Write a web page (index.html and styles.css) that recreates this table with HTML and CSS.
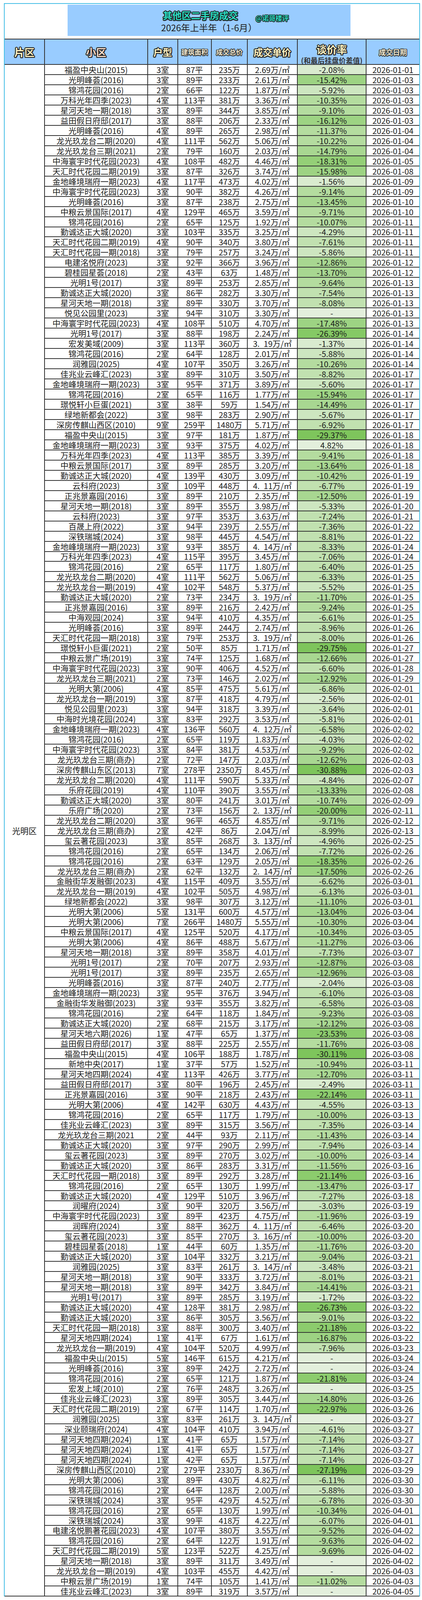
FILE: index.html
```html
<!DOCTYPE html>
<html lang="zh-CN">
<head>
<meta charset="utf-8">
<title>其他区二手房成交</title>
<link rel="stylesheet" href="styles.css">
</head>
<body>
<div class="sheet">
  <div class="title-area">
    <div class="title-box">
      <div class="title-line">
        <span class="title">其他区二手房成交</span>
        <span class="tag">@诺哥楼评</span>
      </div>
      <div class="subtitle">2026年上半年（1-6月）</div>
    </div>
  </div>

  <div class="grid head">
    <div class="area"><span class="lbl f-a">片区</span></div>
    <div><span class="lbl f-b">小区</span></div>
    <div><span class="lbl f-a sm">户型</span></div>
    <div><span class="lbl f-c xs">建筑面积</span></div>
    <div><span class="lbl f-c xs">成交总价</span></div>
    <div><span class="lbl f-a sm">成交单价</span></div>
    <div class="rate-h"><span class="lbl f-a t1">谈价率</span><span class="t2">(和最后挂盘价差值)</span></div>
    <div><span class="lbl f-c xs2">成交日期</span></div>
  </div>

  <div class="grid body">
    <div class="area">光明区</div>
<div class="row"><div>福盈中央山(2015)</div><div>3室</div><div>87平</div><div>235万</div><div>2.69万/㎡</div><div class="c1">-2.08%</div><div>2026-01-01</div></div>
<div class="row"><div>光明峰荟(2016)</div><div>3室</div><div>89平</div><div>233万</div><div>2.61万/㎡</div><div class="c6">-15.42%</div><div>2026-01-03</div></div>
<div class="row"><div>锦鸿花园(2016)</div><div>2室</div><div>66平</div><div>122万</div><div>1.87万/㎡</div><div class="c2">-5.92%</div><div>2026-01-03</div></div>
<div class="row"><div>万科光年四季(2023)</div><div>4室</div><div>113平</div><div>381万</div><div>3.36万/㎡</div><div class="c4">-10.35%</div><div>2026-01-03</div></div>
<div class="row"><div>星河天地一期(2018)</div><div>3室</div><div>89平</div><div>344万</div><div>3.85万/㎡</div><div class="c4">-9.10%</div><div>2026-01-03</div></div>
<div class="row"><div>益田假日府邸(2017)</div><div>3室</div><div>88平</div><div>206万</div><div>2.33万/㎡</div><div class="c6">-16.12%</div><div>2026-01-03</div></div>
<div class="row"><div>光明峰荟(2016)</div><div>4室</div><div>89平</div><div>265万</div><div>2.98万/㎡</div><div class="c4">-11.37%</div><div>2026-01-04</div></div>
<div class="row"><div>龙光玖龙台二期(2020)</div><div>4室</div><div>111平</div><div>562万</div><div>5.06万/㎡</div><div class="c4">-10.22%</div><div>2026-01-04</div></div>
<div class="row"><div>龙光玖龙台三期(2021)</div><div>2室</div><div>79平</div><div>160万</div><div>2.03万/㎡</div><div class="c5">-14.79%</div><div>2026-01-04</div></div>
<div class="row"><div>中海寰宇时代花园(2023)</div><div>4室</div><div>108平</div><div>482万</div><div>4.46万/㎡</div><div class="c7">-18.31%</div><div>2026-01-05</div></div>
<div class="row"><div>天汇时代花园二期(2019)</div><div>3室</div><div>87平</div><div>326万</div><div>3.74万/㎡</div><div class="c6">-15.98%</div><div>2026-01-08</div></div>
<div class="row"><div>金地峰境瑞府一期(2023)</div><div>4室</div><div>117平</div><div>473万</div><div>4.02万/㎡</div><div class="c1">-1.56%</div><div>2026-01-09</div></div>
<div class="row"><div>中海寰宇时代花园(2023)</div><div>3室</div><div>90平</div><div>382万</div><div>4.26万/㎡</div><div class="c4">-9.14%</div><div>2026-01-09</div></div>
<div class="row"><div>光明峰荟(2016)</div><div>3室</div><div>87平</div><div>238万</div><div>2.75万/㎡</div><div class="c5">-13.45%</div><div>2026-01-10</div></div>
<div class="row"><div>中粮云景国际(2017)</div><div>4室</div><div>129平</div><div>465万</div><div>3.59万/㎡</div><div class="c4">-9.71%</div><div>2026-01-10</div></div>
<div class="row"><div>锦鸿花园(2016)</div><div>2室</div><div>65平</div><div>125万</div><div>1.92万/㎡</div><div class="c4">-10.07%</div><div>2026-01-11</div></div>
<div class="row"><div>勤诚达正大城(2020)</div><div>3室</div><div>103平</div><div>335万</div><div>3.25万/㎡</div><div class="c2">-4.29%</div><div>2026-01-11</div></div>
<div class="row"><div>天汇时代花园二期(2019)</div><div>4室</div><div>90平</div><div>340万</div><div>3.80万/㎡</div><div class="c3">-7.61%</div><div>2026-01-11</div></div>
<div class="row"><div>天汇时代花园一期(2018)</div><div>3室</div><div>79平</div><div>257万</div><div>3.24万/㎡</div><div class="c2">-5.86%</div><div>2026-01-11</div></div>
<div class="row"><div>电建洺悦府(2023)</div><div>3室</div><div>92平</div><div>366万</div><div>3.96万/㎡</div><div class="c5">-12.86%</div><div>2026-01-12</div></div>
<div class="row"><div>碧桂园星荟(2018)</div><div>2室</div><div>43平</div><div>63万</div><div>1.48万/㎡</div><div class="c5">-13.70%</div><div>2026-01-12</div></div>
<div class="row"><div>光明1号(2017)</div><div>3室</div><div>89平</div><div>253万</div><div>2.85万/㎡</div><div class="c4">-9.64%</div><div>2026-01-13</div></div>
<div class="row"><div>勤诚达正大城(2020)</div><div>3室</div><div>86平</div><div>282万</div><div>3.30万/㎡</div><div class="c3">-7.54%</div><div>2026-01-13</div></div>
<div class="row"><div>星河天地一期(2018)</div><div>3室</div><div>89平</div><div>330万</div><div>3.70万/㎡</div><div class="c3">-8.08%</div><div>2026-01-13</div></div>
<div class="row"><div>悦见公园里(2023)</div><div>3室</div><div>94平</div><div>310万</div><div>3.30万/㎡</div><div class="c0">-</div><div>2026-01-13</div></div>
<div class="row"><div>中海寰宇时代花园(2023)</div><div>4室</div><div>108平</div><div>510万</div><div>4.70万/㎡</div><div class="c6">-17.48%</div><div>2026-01-13</div></div>
<div class="row"><div>光明1号(2017)</div><div>3室</div><div>88平</div><div>198万</div><div>2.24万/㎡</div><div class="c9">-26.39%</div><div>2026-01-14</div></div>
<div class="row"><div>宏发美域(2009)</div><div>3室</div><div>113平</div><div>360万</div><div>3.&ensp;19万/㎡</div><div class="c1">-1.37%</div><div>2026-01-14</div></div>
<div class="row"><div>锦鸿花园(2016)</div><div>2室</div><div>64平</div><div>128万</div><div>2.01万/㎡</div><div class="c2">-5.88%</div><div>2026-01-14</div></div>
<div class="row"><div>润雅园(2025)</div><div>4室</div><div>107平</div><div>350万</div><div>3.26万/㎡</div><div class="c4">-10.26%</div><div>2026-01-14</div></div>
<div class="row"><div>佳兆业云峰汇(2023)</div><div>3室</div><div>89平</div><div>310万</div><div>3.50万/㎡</div><div class="c3">-8.82%</div><div>2026-01-17</div></div>
<div class="row"><div>金地峰境瑞府一期(2023)</div><div>3室</div><div>95平</div><div>371万</div><div>3.89万/㎡</div><div class="c2">-5.60%</div><div>2026-01-17</div></div>
<div class="row"><div>锦鸿花园(2016)</div><div>2室</div><div>65平</div><div>116万</div><div>1.77万/㎡</div><div class="c6">-15.94%</div><div>2026-01-17</div></div>
<div class="row"><div>璟悦轩小巨蛋(2021)</div><div>3室</div><div>38平</div><div>59万</div><div>1.54万/㎡</div><div class="c5">-14.49%</div><div>2026-01-17</div></div>
<div class="row"><div>绿地新都会(2022)</div><div>3室</div><div>98平</div><div>283万</div><div>2.90万/㎡</div><div class="c2">-5.67%</div><div>2026-01-17</div></div>
<div class="row"><div>深房传麒山西区(2010)</div><div>9室</div><div>259平</div><div>1480万</div><div>5.71万/㎡</div><div class="c3">-6.92%</div><div>2026-01-17</div></div>
<div class="row"><div>福盈中央山(2015)</div><div>3室</div><div>97平</div><div>181万</div><div>1.87万/㎡</div><div class="c10">-29.37%</div><div>2026-01-18</div></div>
<div class="row"><div>金地峰境瑞府一期(2023)</div><div>3室</div><div>93平</div><div>375万</div><div>4.02万/㎡</div><div class="c0">4.82%</div><div>2026-01-18</div></div>
<div class="row"><div>万科光年四季(2023)</div><div>4室</div><div>113平</div><div>385万</div><div>3.39万/㎡</div><div class="c4">-9.41%</div><div>2026-01-18</div></div>
<div class="row"><div>中粮云景国际(2017)</div><div>3室</div><div>89平</div><div>285万</div><div>3.20万/㎡</div><div class="c5">-13.64%</div><div>2026-01-18</div></div>
<div class="row"><div>勤诚达正大城(2020)</div><div>4室</div><div>139平</div><div>430万</div><div>3.09万/㎡</div><div class="c4">-10.42%</div><div>2026-01-19</div></div>
<div class="row"><div>云科府(2023)</div><div>3室</div><div>109平</div><div>448万</div><div>4.&ensp;11万/㎡</div><div class="c3">-6.77%</div><div>2026-01-19</div></div>
<div class="row"><div>正兆景嘉园(2016)</div><div>3室</div><div>89平</div><div>210万</div><div>2.35万/㎡</div><div class="c5">-12.50%</div><div>2026-01-19</div></div>
<div class="row"><div>星河天地一期(2018)</div><div>3室</div><div>89平</div><div>355万</div><div>3.98万/㎡</div><div class="c2">-5.33%</div><div>2026-01-20</div></div>
<div class="row"><div>云科府(2023)</div><div>3室</div><div>97平</div><div>353万</div><div>3.63万/㎡</div><div class="c3">-7.24%</div><div>2026-01-21</div></div>
<div class="row"><div>百晟上府(2022)</div><div>3室</div><div>94平</div><div>239万</div><div>2.55万/㎡</div><div class="c3">-7.36%</div><div>2026-01-22</div></div>
<div class="row"><div>深铁瑞城(2024)</div><div>3室</div><div>98平</div><div>445万</div><div>4.54万/㎡</div><div class="c3">-8.81%</div><div>2026-01-22</div></div>
<div class="row"><div>金地峰境瑞府一期(2023)</div><div>3室</div><div>93平</div><div>385万</div><div>4.&ensp;14万/㎡</div><div class="c3">-8.33%</div><div>2026-01-24</div></div>
<div class="row"><div>万科光年四季(2023)</div><div>4室</div><div>115平</div><div>395万</div><div>3.45万/㎡</div><div class="c3">-7.06%</div><div>2026-01-24</div></div>
<div class="row"><div>锦鸿花园(2016)</div><div>2室</div><div>65平</div><div>117万</div><div>1.80万/㎡</div><div class="c3">-6.40%</div><div>2026-01-25</div></div>
<div class="row"><div>龙光玖龙台二期(2020)</div><div>4室</div><div>111平</div><div>562万</div><div>5.06万/㎡</div><div class="c3">-6.33%</div><div>2026-01-25</div></div>
<div class="row"><div>龙光玖龙台一期(2019)</div><div>4室</div><div>102平</div><div>548万</div><div>5.37万/㎡</div><div class="c2">-5.52%</div><div>2026-01-25</div></div>
<div class="row"><div>勤诚达正大城(2020)</div><div>2室</div><div>73平</div><div>234万</div><div>3.&ensp;19万/㎡</div><div class="c4">-11.70%</div><div>2026-01-25</div></div>
<div class="row"><div>正兆景嘉园(2016)</div><div>3室</div><div>89平</div><div>216万</div><div>2.42万/㎡</div><div class="c4">-9.24%</div><div>2026-01-25</div></div>
<div class="row"><div>中海观园(2024)</div><div>3室</div><div>94平</div><div>410万</div><div>4.35万/㎡</div><div class="c3">-6.61%</div><div>2026-01-25</div></div>
<div class="row"><div>光明峰荟(2016)</div><div>3室</div><div>89平</div><div>244万</div><div>2.74万/㎡</div><div class="c3">-8.96%</div><div>2026-01-26</div></div>
<div class="row"><div>天汇时代花园一期(2018)</div><div>3室</div><div>79平</div><div>253万</div><div>3.&ensp;19万/㎡</div><div class="c3">-8.00%</div><div>2026-01-26</div></div>
<div class="row"><div>璟悦轩小巨蛋(2021)</div><div>2室</div><div>50平</div><div>85万</div><div>1.71万/㎡</div><div class="c10">-29.75%</div><div>2026-01-27</div></div>
<div class="row"><div>中粮云景广场(2019)</div><div>3室</div><div>74平</div><div>125万</div><div>1.68万/㎡</div><div class="c5">-12.66%</div><div>2026-01-27</div></div>
<div class="row"><div>中海寰宇时代花园(2023)</div><div>3室</div><div>90平</div><div>406万</div><div>4.52万/㎡</div><div class="c3">-6.60%</div><div>2026-01-28</div></div>
<div class="row"><div>龙光玖龙台三期(2021)</div><div>2室</div><div>73平</div><div>146万</div><div>2.02万/㎡</div><div class="c5">-12.92%</div><div>2026-01-29</div></div>
<div class="row"><div>光明大第(2006)</div><div>4室</div><div>85平</div><div>475万</div><div>5.61万/㎡</div><div class="c3">-6.86%</div><div>2026-02-01</div></div>
<div class="row"><div>龙光玖龙台一期(2019)</div><div>3室</div><div>87平</div><div>418万</div><div>4.79万/㎡</div><div class="c1">-2.56%</div><div>2026-02-01</div></div>
<div class="row"><div>悦见公园里(2023)</div><div>3室</div><div>94平</div><div>318万</div><div>3.39万/㎡</div><div class="c2">-3.64%</div><div>2026-02-01</div></div>
<div class="row"><div>中海时光境花园(2024)</div><div>3室</div><div>83平</div><div>292万</div><div>3.53万/㎡</div><div class="c2">-5.81%</div><div>2026-02-01</div></div>
<div class="row"><div>金地峰境瑞府一期(2023)</div><div>4室</div><div>136平</div><div>560万</div><div>4.&ensp;12万/㎡</div><div class="c3">-6.58%</div><div>2026-02-02</div></div>
<div class="row"><div>锦鸿花园(2016)</div><div>2室</div><div>65平</div><div>119万</div><div>1.83万/㎡</div><div class="c2">-4.03%</div><div>2026-02-02</div></div>
<div class="row"><div>中海寰宇时代花园(2023)</div><div>3室</div><div>84平</div><div>381万</div><div>4.53万/㎡</div><div class="c4">-9.29%</div><div>2026-02-02</div></div>
<div class="row"><div>龙光玖龙台三期(商办)</div><div>2室</div><div>72平</div><div>147万</div><div>2.03万/㎡</div><div class="c5">-12.62%</div><div>2026-02-03</div></div>
<div class="row"><div>深房传麒山东区(2013)</div><div>7室</div><div>278平</div><div>2350万</div><div>8.45万/㎡</div><div class="c10">-30.88%</div><div>2026-02-03</div></div>
<div class="row"><div>龙光玖龙台二期(2020)</div><div>4室</div><div>111平</div><div>590万</div><div>5.33万/㎡</div><div class="c2">-4.84%</div><div>2026-02-07</div></div>
<div class="row"><div>乐府花园(2019)</div><div>4室</div><div>110平</div><div>390万</div><div>3.55万/㎡</div><div class="c5">-13.33%</div><div>2026-02-08</div></div>
<div class="row"><div>勤诚达正大城(2020)</div><div>3室</div><div>80平</div><div>241万</div><div>3.01万/㎡</div><div class="c4">-10.74%</div><div>2026-02-09</div></div>
<div class="row"><div>乐府广场(2020)</div><div>2室</div><div>73平</div><div>156万</div><div>2.&ensp;13万/㎡</div><div class="c7">-20.00%</div><div>2026-02-11</div></div>
<div class="row"><div>龙光玖龙台二期(2020)</div><div>3室</div><div>96平</div><div>465万</div><div>4.85万/㎡</div><div class="c4">-9.71%</div><div>2026-02-12</div></div>
<div class="row"><div>龙光玖龙台三期(商办)</div><div>2室</div><div>42平</div><div>86万</div><div>2.04万/㎡</div><div class="c3">-8.99%</div><div>2026-02-13</div></div>
<div class="row"><div>玺云著花园(2023)</div><div>3室</div><div>85平</div><div>268万</div><div>3.&ensp;13万/㎡</div><div class="c2">-4.96%</div><div>2026-02-25</div></div>
<div class="row"><div>锦鸿花园(2016)</div><div>2室</div><div>65平</div><div>134万</div><div>2.06万/㎡</div><div class="c3">-7.72%</div><div>2026-02-26</div></div>
<div class="row"><div>锦鸿花园(2016)</div><div>2室</div><div>63平</div><div>129万</div><div>2.05万/㎡</div><div class="c7">-18.35%</div><div>2026-02-26</div></div>
<div class="row"><div>龙光玖龙台三期(商办)</div><div>2室</div><div>62平</div><div>132万</div><div>2.&ensp;14万/㎡</div><div class="c6">-17.50%</div><div>2026-02-26</div></div>
<div class="row"><div>金融街华发融御(2023)</div><div>4室</div><div>115平</div><div>409万</div><div>3.55万/㎡</div><div class="c3">-6.62%</div><div>2026-03-01</div></div>
<div class="row"><div>龙光玖龙台一期(2019)</div><div>4室</div><div>102平</div><div>505万</div><div>4.98万/㎡</div><div class="c3">-6.13%</div><div>2026-03-01</div></div>
<div class="row"><div>绿地新都会(2022)</div><div>3室</div><div>98平</div><div>307万</div><div>3.12万/㎡</div><div class="c4">-11.10%</div><div>2026-03-01</div></div>
<div class="row"><div>光明大第(2006)</div><div>5室</div><div>131平</div><div>600万</div><div>4.57万/㎡</div><div class="c5">-13.04%</div><div>2026-03-04</div></div>
<div class="row"><div>光明大第(2006)</div><div>7室</div><div>266平</div><div>1480万</div><div>5.55万/㎡</div><div class="c4">-10.30%</div><div>2026-03-04</div></div>
<div class="row"><div>中粮云景国际(2017)</div><div>4室</div><div>125平</div><div>520万</div><div>4.17万/㎡</div><div class="c4">-10.34%</div><div>2026-03-05</div></div>
<div class="row"><div>光明大第(2006)</div><div>4室</div><div>86平</div><div>488万</div><div>5.67万/㎡</div><div class="c4">-11.27%</div><div>2026-03-06</div></div>
<div class="row"><div>星河天地一期(2018)</div><div>3室</div><div>89平</div><div>358万</div><div>4.01万/㎡</div><div class="c3">-7.73%</div><div>2026-03-07</div></div>
<div class="row"><div>光明1号(2017)</div><div>2室</div><div>70平</div><div>207万</div><div>2.93万/㎡</div><div class="c5">-12.87%</div><div>2026-03-08</div></div>
<div class="row"><div>光明1号(2017)</div><div>3室</div><div>89平</div><div>235万</div><div>2.65万/㎡</div><div class="c5">-12.96%</div><div>2026-03-08</div></div>
<div class="row"><div>光明峰荟(2016)</div><div>3室</div><div>87平</div><div>240万</div><div>2.77万/㎡</div><div class="c1">-2.04%</div><div>2026-03-08</div></div>
<div class="row"><div>金地峰境瑞府一期(2023)</div><div>3室</div><div>95平</div><div>376万</div><div>3.94万/㎡</div><div class="c3">-6.10%</div><div>2026-03-08</div></div>
<div class="row"><div>金融街华发融御(2023)</div><div>3室</div><div>93平</div><div>355万</div><div>3.82万/㎡</div><div class="c3">-6.58%</div><div>2026-03-08</div></div>
<div class="row"><div>锦鸿花园(2016)</div><div>2室</div><div>64平</div><div>118万</div><div>1.84万/㎡</div><div class="c4">-9.23%</div><div>2026-03-08</div></div>
<div class="row"><div>勤诚达正大城(2020)</div><div>2室</div><div>68平</div><div>215万</div><div>3.17万/㎡</div><div class="c5">-12.12%</div><div>2026-03-08</div></div>
<div class="row"><div>星河天地六期(2026)</div><div>1室</div><div>47平</div><div>65万</div><div>1.37万/㎡</div><div class="c8">-23.53%</div><div>2026-03-08</div></div>
<div class="row"><div>益田假日府邸(2017)</div><div>3室</div><div>88平</div><div>225万</div><div>2.55万/㎡</div><div class="c4">-11.76%</div><div>2026-03-08</div></div>
<div class="row"><div>福盈中央山(2015)</div><div>4室</div><div>106平</div><div>188万</div><div>1.78万/㎡</div><div class="c10">-30.11%</div><div>2026-03-08</div></div>
<div class="row"><div>新地中央(2017)</div><div>1室</div><div>37平</div><div>57万</div><div>1.52万/㎡</div><div class="c4">-10.94%</div><div>2026-03-11</div></div>
<div class="row"><div>星河天地四期(2024)</div><div>4室</div><div>113平</div><div>426万</div><div>3.77万/㎡</div><div class="c5">-12.70%</div><div>2026-03-11</div></div>
<div class="row"><div>益田假日府邸(2017)</div><div>3室</div><div>80平</div><div>196万</div><div>2.45万/㎡</div><div class="c1">-2.49%</div><div>2026-03-11</div></div>
<div class="row"><div>正兆景嘉园(2016)</div><div>3室</div><div>90平</div><div>218万</div><div>2.43万/㎡</div><div class="c8">-22.14%</div><div>2026-03-11</div></div>
<div class="row"><div>光明大第(2006)</div><div>4室</div><div>142平</div><div>630万</div><div>4.43万/㎡</div><div class="c2">-4.55%</div><div>2026-03-13</div></div>
<div class="row"><div>锦鸿花园(2016)</div><div>2室</div><div>65平</div><div>117万</div><div>1.79万/㎡</div><div class="c4">-10.00%</div><div>2026-03-13</div></div>
<div class="row"><div>佳兆业云峰汇(2023)</div><div>3室</div><div>89平</div><div>315万</div><div>3.56万/㎡</div><div class="c3">-7.35%</div><div>2026-03-14</div></div>
<div class="row"><div>龙光玖龙台三期(2021</div><div>2室</div><div>44平</div><div>93万</div><div>2.11万/㎡</div><div class="c4">-11.43%</div><div>2026-03-14</div></div>
<div class="row"><div>勤诚达正大城(2020)</div><div>3室</div><div>97平</div><div>290万</div><div>2.99万/㎡</div><div class="c3">-7.94%</div><div>2026-03-14</div></div>
<div class="row"><div>玺云著花园(2023)</div><div>3室</div><div>89平</div><div>270万</div><div>3.02万/㎡</div><div class="c4">-10.00%</div><div>2026-03-14</div></div>
<div class="row"><div>勤诚达正大城(2020)</div><div>3室</div><div>86平</div><div>283万</div><div>3.31万/㎡</div><div class="c4">-11.56%</div><div>2026-03-16</div></div>
<div class="row"><div>天汇时代花园一期(2018)</div><div>3室</div><div>89平</div><div>292万</div><div>3.28万/㎡</div><div class="c8">-21.14%</div><div>2026-03-16</div></div>
<div class="row"><div>锦鸿花园(2016)</div><div>2室</div><div>65平</div><div>130万</div><div>1.99万/㎡</div><div class="c5">-13.47%</div><div>2026-03-17</div></div>
<div class="row"><div>勤诚达正大城(2020)</div><div>4室</div><div>129平</div><div>510万</div><div>3.96万/㎡</div><div class="c3">-7.27%</div><div>2026-03-18</div></div>
<div class="row"><div>润曜府(2024)</div><div>3室</div><div>90平</div><div>320万</div><div>3.56万/㎡</div><div class="c2">-3.03%</div><div>2026-03-19</div></div>
<div class="row"><div>中海寰宇时代花园(2023)</div><div>3室</div><div>89平</div><div>423万</div><div>4.75万/㎡</div><div class="c4">-11.96%</div><div>2026-03-19</div></div>
<div class="row"><div>润晖府(2024)</div><div>3室</div><div>88平</div><div>362万</div><div>4.&ensp;11万/㎡</div><div class="c3">-6.46%</div><div>2026-03-20</div></div>
<div class="row"><div>玺云著花园(2023)</div><div>3室</div><div>85平</div><div>270万</div><div>3.&ensp;16万/㎡</div><div class="c4">-10.00%</div><div>2026-03-20</div></div>
<div class="row"><div>碧桂园星荟(2018)</div><div>1室</div><div>44平</div><div>60万</div><div>1.35万/㎡</div><div class="c4">-11.76%</div><div>2026-03-20</div></div>
<div class="row"><div>勤诚达正大城(2020)</div><div>3室</div><div>104平</div><div>332万</div><div>3.21万/㎡</div><div class="c4">-9.04%</div><div>2026-03-21</div></div>
<div class="row"><div>润雅园(2025)</div><div>3室</div><div>83平</div><div>261万</div><div>3.&ensp;14万/㎡</div><div class="c2">-3.48%</div><div>2026-03-21</div></div>
<div class="row"><div>星河天地一期(2018)</div><div>3室</div><div>90平</div><div>333万</div><div>3.72万/㎡</div><div class="c3">-8.01%</div><div>2026-03-21</div></div>
<div class="row"><div>星河天地一期(2018)</div><div>3室</div><div>89平</div><div>342万</div><div>3.84万/㎡</div><div class="c5">-14.41%</div><div>2026-03-21</div></div>
<div class="row"><div>光明1号(2017)</div><div>3室</div><div>89平</div><div>285万</div><div>3.19万/㎡</div><div class="c1">-1.72%</div><div>2026-03-22</div></div>
<div class="row"><div>勤诚达正大城(2020)</div><div>4室</div><div>128平</div><div>381万</div><div>2.98万/㎡</div><div class="c9">-26.73%</div><div>2026-03-22</div></div>
<div class="row"><div>勤诚达正大城(2020)</div><div>3室</div><div>86平</div><div>305万</div><div>3.56万/㎡</div><div class="c4">-9.01%</div><div>2026-03-22</div></div>
<div class="row"><div>天汇时代花园一期(2018)</div><div>3室</div><div>88平</div><div>300万</div><div>3.40万/㎡</div><div class="c8">-21.18%</div><div>2026-03-22</div></div>
<div class="row"><div>星河天地四期(2024)</div><div>1室</div><div>41平</div><div>67万</div><div>1.61万/㎡</div><div class="c6">-16.87%</div><div>2026-03-22</div></div>
<div class="row"><div>龙光玖龙台一期(2019)</div><div>4室</div><div>104平</div><div>520万</div><div>4.99万/㎡</div><div class="c3">-7.96%</div><div>2026-03-23</div></div>
<div class="row"><div>福盈中央山(2015)</div><div>5室</div><div>146平</div><div>615万</div><div>4.21万/㎡</div><div class="c0">-</div><div>2026-03-24</div></div>
<div class="row"><div>光明峰荟(2016)</div><div>3室</div><div>89平</div><div>242万</div><div>2.72万/㎡</div><div class="c0">-</div><div>2026-03-24</div></div>
<div class="row"><div>锦鸿花园(2016)</div><div>2室</div><div>65平</div><div>121万</div><div>1.87万/㎡</div><div class="c8">-21.81%</div><div>2026-03-24</div></div>
<div class="row"><div>宏发上域(2010)</div><div>2室</div><div>76平</div><div>248万</div><div>3.26万/㎡</div><div class="c0">-</div><div>2026-03-25</div></div>
<div class="row"><div>佳兆业云峰汇(2023)</div><div>3室</div><div>89平</div><div>305万</div><div>3.44万/㎡</div><div class="c5">-14.80%</div><div>2026-03-26</div></div>
<div class="row"><div>天汇时代花园二期(2019)</div><div>2室</div><div>67平</div><div>114万</div><div>1.70万/㎡</div><div class="c8">-22.97%</div><div>2026-03-26</div></div>
<div class="row"><div>润雅园(2025)</div><div>3室</div><div>83平</div><div>261万</div><div>3.&ensp;14万/㎡</div><div class="c0">-</div><div>2026-03-27</div></div>
<div class="row"><div>深业颐瑞府(2024)</div><div>4室</div><div>104平</div><div>410万</div><div>3.94万/㎡</div><div class="c2">-4.61%</div><div>2026-03-27</div></div>
<div class="row"><div>星河天地四期(2024)</div><div>1室</div><div>41平</div><div>65万</div><div>1.57万/㎡</div><div class="c3">-7.14%</div><div>2026-03-27</div></div>
<div class="row"><div>星河天地四期(2024)</div><div>1室</div><div>41平</div><div>65万</div><div>1.57万/㎡</div><div class="c3">-7.14%</div><div>2026-03-27</div></div>
<div class="row"><div>星河天地四期(2024)</div><div>1室</div><div>42平</div><div>65万</div><div>1.57万/㎡</div><div class="c3">-7.14%</div><div>2026-03-27</div></div>
<div class="row"><div>深房传麒山西区(2010)</div><div>2室</div><div>279平</div><div>2330万</div><div>8.36万/㎡</div><div class="c10">-27.19%</div><div>2026-03-29</div></div>
<div class="row"><div>光明大第(2006)</div><div>3室</div><div>89平</div><div>430万</div><div>4.82万/㎡</div><div class="c3">-6.11%</div><div>2026-03-30</div></div>
<div class="row"><div>锦鸿花园(2016)</div><div>2室</div><div>64平</div><div>128万</div><div>2.00万/㎡</div><div class="c2">-5.88%</div><div>2026-03-30</div></div>
<div class="row"><div>深铁瑞城(2024)</div><div>3室</div><div>95平</div><div>429万</div><div>4.52万/㎡</div><div class="c3">-6.78%</div><div>2026-03-30</div></div>
<div class="row"><div>锦鸿花园(2016)</div><div>2室</div><div>65平</div><div>130万</div><div>1.99万/㎡</div><div class="c4">-10.34%</div><div>2026-04-01</div></div>
<div class="row"><div>深铁瑞城(2024)</div><div>3室</div><div>99平</div><div>418万</div><div>4.22万/㎡</div><div class="c3">-6.07%</div><div>2026-04-01</div></div>
<div class="row"><div>电建洺悦鹏著花园(2023)</div><div>4室</div><div>107平</div><div>380万</div><div>3.55万/㎡</div><div class="c4">-9.52%</div><div>2026-04-02</div></div>
<div class="row"><div>锦鸿花园(2016)</div><div>2室</div><div>64平</div><div>122万</div><div>1.91万/㎡</div><div class="c4">-9.63%</div><div>2026-04-02</div></div>
<div class="row"><div>天汇时代花园二期(2019)</div><div>5室</div><div>123平</div><div>522万</div><div>4.25万/㎡</div><div class="c4">-9.69%</div><div>2026-04-02</div></div>
<div class="row"><div>星河天地一期(2018)</div><div>3室</div><div>89平</div><div>311万</div><div>3.49万/㎡</div><div class="c0">-</div><div>2026-04-02</div></div>
<div class="row"><div>龙光玖龙台一期(2019)</div><div>4室</div><div>103平</div><div>455万</div><div>4.42万/㎡</div><div class="c0">-</div><div>2026-04-03</div></div>
<div class="row"><div>中粮云景广场(2019)</div><div>1室</div><div>74平</div><div>105万</div><div>1.41万/㎡</div><div class="c4">-11.02%</div><div>2026-04-03</div></div>
<div class="row"><div>佳兆业云峰汇(2023)</div><div>3室</div><div>89平</div><div>319万</div><div>3.57万/㎡</div><div class="c0">-</div><div>2026-04-05</div></div>
  </div>
</div>
</body>
</html>
```

FILE: styles.css
```css
/* The capture window is 1080 x 4096 CSS px, so every vertical
   measure of the 1080 x 5003 reference is multiplied by 0.819. */
* { box-sizing: border-box; }

html, body {
  margin: 0;
  padding: 0;
  background: #ffffff;
}

body {
  font-family: "Noto Sans CJK SC", "Noto Sans", "Liberation Sans", sans-serif;
  color: #1b1b1b;
}

.sheet {
  width: 1065px;
  margin: 8px 0 0 10px;
  border: 2px solid #46bfe6;
  border-bottom: none;
}

/* ---------- title ---------- */
.title-area {
  height: 89px;
  padding: 2px 0 0 161px;
  background: #ffffff;
}

.title-box {
  width: 724px;
  height: 80px;
  background: #99ccff;
  display: flex;
  flex-direction: column;
  padding-top: 14px;
}

.title-line {
  display: flex;
  align-items: center;
  height: 26px;
  padding-left: 244px;
}

.title {
  font-size: 24px;
  font-weight: 700;
  line-height: 26px;
  color: #2adcc2;
  text-shadow:
    2px 0 0 #1c1c1c, -2px 0 0 #1c1c1c, 0 2px 0 #1c1c1c, 0 -2px 0 #1c1c1c,
    1.5px 1.5px 0 #1c1c1c, -1.5px -1.5px 0 #1c1c1c, 1.5px -1.5px 0 #1c1c1c, -1.5px 1.5px 0 #1c1c1c,
    2.5px 2px 1px rgba(0, 0, 0, 0.4);
}

.tag {
  margin-left: 45px;
  margin-top: 13px;
  font-size: 17px;
  font-weight: 700;
  line-height: 20px;
  color: #2adcc2;
  text-shadow:
    1.5px 0 0 #1c1c1c, -1.5px 0 0 #1c1c1c, 0 1.5px 0 #1c1c1c, 0 -1.5px 0 #1c1c1c,
    1px 1px 0 #1c1c1c, -1px -1px 0 #1c1c1c, 1px -1px 0 #1c1c1c, -1px 1px 0 #1c1c1c,
    2px 1.5px 1px rgba(0, 0, 0, 0.35);
}

.subtitle {
  margin-top: 5px;
  height: 26px;
  line-height: 26px;
  text-align: center;
  font-size: 23px;
  color: #222222;
}

/* ---------- grid table ---------- */
.grid {
  display: grid;
  grid-template-columns: 101px 264px 77px 86px 92px 128px 176px 137px;
}

.head {
  height: 67px;
}

.head > div {
  display: flex;
  align-items: center;
  justify-content: center;
  background: #99ccff;
  border-top: 2px solid #333333;
  border-bottom: 2px solid #333333;
  border-left: 2px solid #333333;
}

.head > .area { border-left: none; }

.lbl {
  display: inline-block;
  font-size: 26px;
  line-height: 28px;
  font-weight: 700;
  white-space: nowrap;
  text-shadow:
    2px 0 0 #1c1c1c, -2px 0 0 #1c1c1c, 0 2px 0 #1c1c1c, 0 -2px 0 #1c1c1c,
    1.5px 1.5px 0 #1c1c1c, -1.5px -1.5px 0 #1c1c1c, 1.5px -1.5px 0 #1c1c1c, -1.5px 1.5px 0 #1c1c1c,
    2.5px 2px 1px rgba(0, 0, 0, 0.35);
}

.lbl.sm { font-size: 24px; }

.lbl.xs,
.lbl.xs2 {
  font-size: 17px;
  line-height: 20px;
  text-shadow:
    1.5px 0 0 #1c1c1c, -1.5px 0 0 #1c1c1c, 0 1.5px 0 #1c1c1c, 0 -1.5px 0 #1c1c1c,
    1px 1px 0 #1c1c1c, -1px -1px 0 #1c1c1c, 1px -1px 0 #1c1c1c, -1px 1px 0 #1c1c1c,
    1.5px 1.5px 1px rgba(0, 0, 0, 0.35);
}

.lbl.xs2 { font-size: 18px; }

.f-a { color: #fdf1c2; }
.f-b { color: #f7dccb; }
.f-c { color: #f6eed6; }

.head > .rate-h {
  flex-direction: column;
  justify-content: flex-end;
  padding-bottom: 0;
}

.rate-h .t1 {
  line-height: 26px;
}

.rate-h .t2 {
  margin-top: 5px;
  font-size: 18px;
  line-height: 20px;
  font-weight: 700;
  color: #333333;
  white-space: nowrap;
}

.body {
  grid-auto-rows: 25.98px;
}

.body > .area {
  grid-column: 1;
  grid-row: 1 / span 151;
  display: flex;
  align-items: center;
  justify-content: center;
  font-size: 21px;
  border-bottom: 2px solid #333333;
}

.row { display: contents; }

.row > div {
  display: flex;
  align-items: center;
  justify-content: center;
  min-width: 0;
  border-left: 2px solid #333333;
  border-bottom: 2px solid #333333;
  font-size: 20.5px;
  line-height: 22px;
  white-space: nowrap;
  background: #ffffff;
  color: #1b1b1b;
}

/* 谈价率 colour scale */
.row > .c0 { background: #e3efdc; }
.row > .c1 { background: #d9ebcf; }
.row > .c2 { background: #cde6c0; }
.row > .c3 { background: #c1e1b0; }
.row > .c4 { background: #b4dc9f; }
.row > .c5 { background: #a8d791; }
.row > .c6 { background: #9dd383; }
.row > .c7 { background: #94cf77; }
.row > .c8 { background: #8ccc6d; }
.row > .c9 { background: #85c965; }
.row > .c10 { background: #7ec55c; }
```
